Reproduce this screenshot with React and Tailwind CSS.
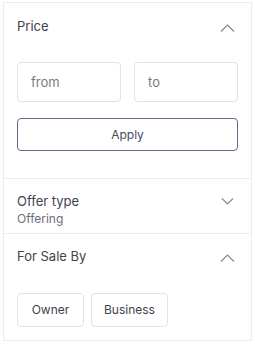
const ChevronUp = () => (
  <svg width="15" height="8" viewBox="0 0 15 8" fill="none">
    <path d="M1 7.5L7.5 1L14 7.5" stroke="#8a8a94" strokeWidth="1.2" />
  </svg>
);

const ChevronDown = () => (
  <svg width="13" height="7" viewBox="0 0 13 7" fill="none">
    <path d="M1 0.5L6.5 6L12 0.5" stroke="#8a8a94" strokeWidth="1.2" />
  </svg>
);

export default function App() {
  return (
    <div
      className="w-[255px] h-[344px] bg-white pt-[2px] pl-[3px]"
      style={{ fontFamily: "Inter, 'Noto Sans', sans-serif" }}
    >
      <div className="w-[249px] border border-[#ededed] text-[#42424f]">
        <section className="px-[13px] pt-[14px] pb-[27px] border-b border-[#ededed]">
          <div className="flex items-center justify-between h-[20px]">
            <span className="text-[13px]">Price</span>
            <span className="mr-[3px] mt-[2px]">
              <ChevronUp />
            </span>
          </div>
          <div className="mt-[25px] flex gap-[13px]">
            <input
              className="w-[104px] h-[40px] rounded border border-[#e2e2e6] px-[13px] text-[13px] placeholder:text-[#7a7a84] outline-none"
              placeholder="from"
            />
            <input
              className="w-[104px] h-[40px] rounded border border-[#e2e2e6] px-[13px] text-[13px] placeholder:text-[#7a7a84] outline-none"
              placeholder="to"
            />
          </div>
          <button className="mt-[16px] w-[221px] h-[33px] rounded border border-[#6b6888] text-[12px] text-[#4a4858]">
            Apply
          </button>
        </section>
        <section className="px-[13px] pt-[14px] pb-[6px] border-b border-[#ededed]">
          <div className="flex items-start justify-between">
            <div className="leading-[17px]">
              <div className="text-[13px]">Offer type</div>
              <div className="text-[12px] text-[#6e6e78]">Offering</div>
            </div>
            <span className="mr-[4px] mt-[5px]">
              <ChevronDown />
            </span>
          </div>
        </section>
        <section className="px-[13px] pt-[13px] pb-[13px]">
          <div className="flex items-center justify-between h-[20px]">
            <span className="text-[13px]">For Sale By</span>
            <span className="mr-[3px] mt-[2px]">
              <ChevronUp />
            </span>
          </div>
          <div className="mt-[26px] flex gap-[7px]">
            <button className="w-[67px] h-[34px] rounded border border-[#e2e2e6] text-[12px]">
              Owner
            </button>
            <button className="w-[77px] h-[34px] rounded border border-[#e2e2e6] text-[12px]">
              Business
            </button>
          </div>
        </section>
      </div>
    </div>
  );
}
